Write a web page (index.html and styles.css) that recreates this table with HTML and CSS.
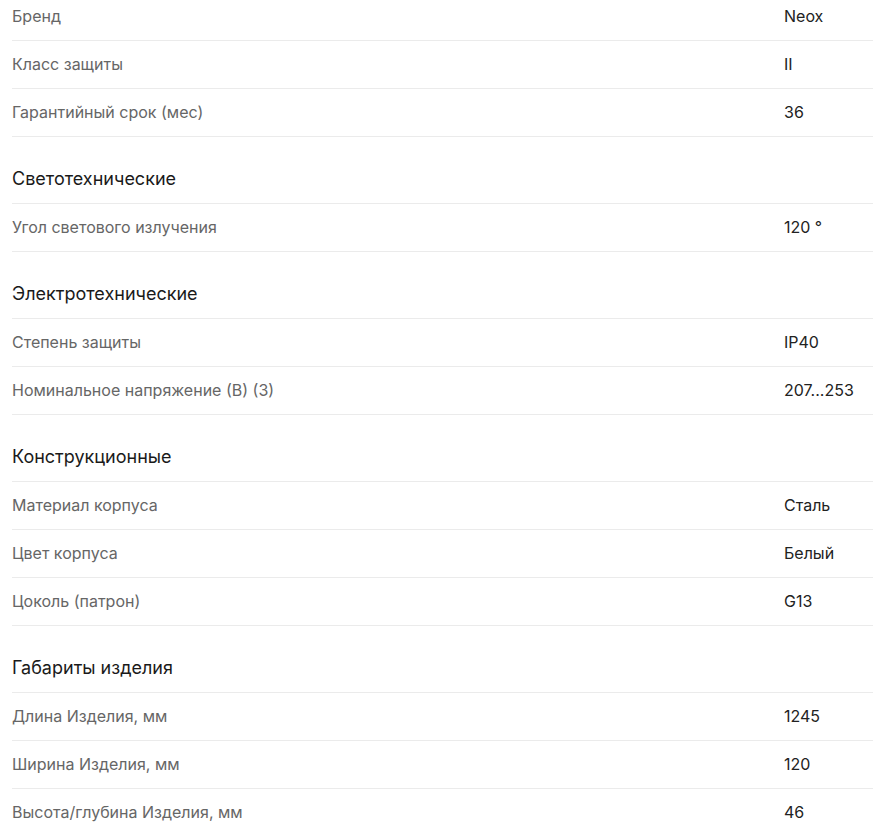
FILE: index.html
```html
<!DOCTYPE html>
<html lang="ru">
<head>
<meta charset="utf-8">
<link rel="stylesheet" href="styles.css">
</head>
<body>
<div class="specs">
  <div class="group first">
    <div class="row"><span class="label">Бренд</span><span class="value">Neox</span></div>
    <div class="row"><span class="label">Класс защиты</span><span class="value">II</span></div>
    <div class="row"><span class="label">Гарантийный срок (мес)</span><span class="value">36</span></div>
  </div>
  <div class="group">
    <div class="title">Светотехнические</div>
    <div class="row"><span class="label">Угол светового излучения</span><span class="value">120 °</span></div>
  </div>
  <div class="group">
    <div class="title">Электротехнические</div>
    <div class="row"><span class="label">Степень защиты</span><span class="value">IP40</span></div>
    <div class="row"><span class="label">Номинальное напряжение (В) (3)</span><span class="value">207...253</span></div>
  </div>
  <div class="group">
    <div class="title">Конструкционные</div>
    <div class="row"><span class="label">Материал корпуса</span><span class="value">Сталь</span></div>
    <div class="row"><span class="label">Цвет корпуса</span><span class="value">Белый</span></div>
    <div class="row"><span class="label">Цоколь (патрон)</span><span class="value">G13</span></div>
  </div>
  <div class="group">
    <div class="title">Габариты изделия</div>
    <div class="row"><span class="label">Длина Изделия, мм</span><span class="value">1245</span></div>
    <div class="row"><span class="label">Ширина Изделия, мм</span><span class="value">120</span></div>
    <div class="row"><span class="label">Высота/глубина Изделия, мм</span><span class="value">46</span></div>
  </div>
</div>
</body>
</html>
```
FILE: styles.css
```css
html, body {
  margin: 0;
  padding: 0;
  background: #ffffff;
}
body {
  font-family: Inter, "Noto Sans", sans-serif;
  overflow: hidden;
}
.specs {
  margin: -7px 0 0 12px;
  display: flex;
  flex-direction: column;
}
.group {
  display: flex;
  flex-direction: column;
  margin-top: 19px;
}
.group.first {
  margin-top: 0;
}
.title {
  height: 48px;
  box-sizing: border-box;
  padding-bottom: 2px;
  border-bottom: 1px solid #ebebeb;
  display: flex;
  align-items: center;
  font-size: 18px;
  color: #1a1a1a;
}
.row {
  display: grid;
  grid-template-columns: 772px 1fr;
  height: 48px;
  box-sizing: border-box;
  padding-bottom: 2px;
  align-items: center;
  border-bottom: 1px solid #ebebeb;
  font-size: 16px;
}
.label {
  color: #666666;
}
.value {
  color: #222222;
}
```
